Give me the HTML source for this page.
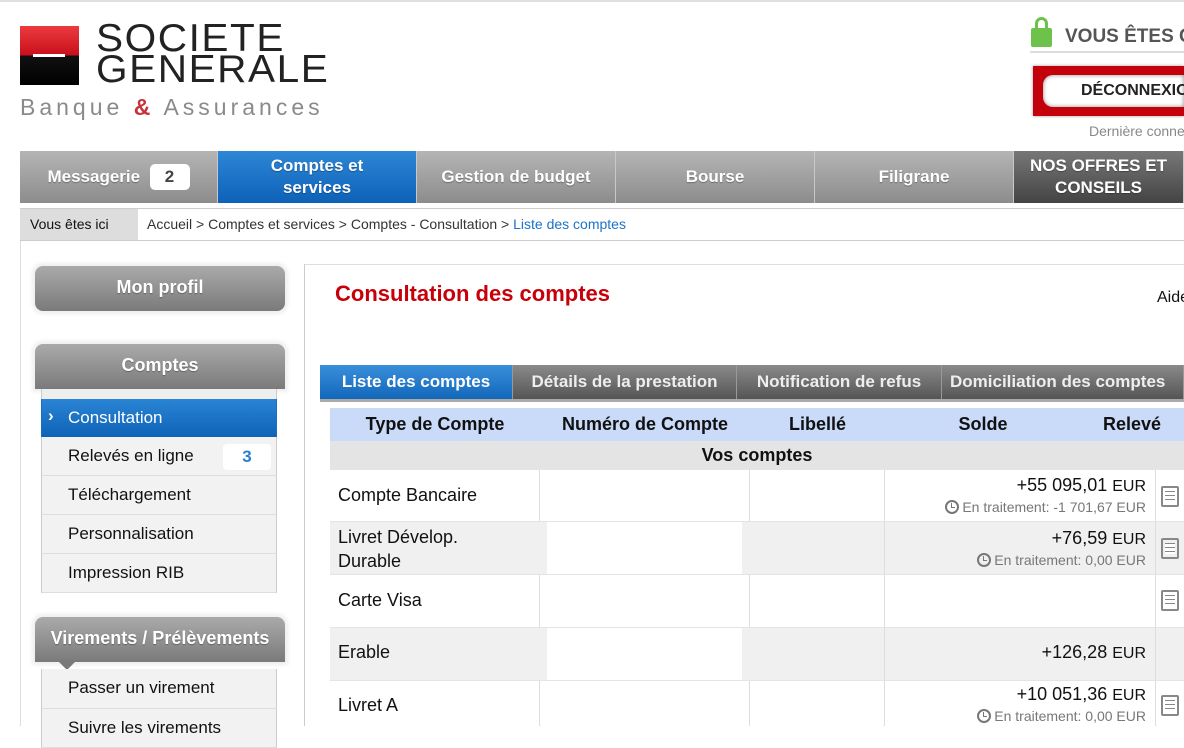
<!DOCTYPE html>
<html><head><meta charset="utf-8"><style>
*{margin:0;padding:0;box-sizing:border-box}
body{width:1184px;height:726px;overflow:hidden;background:#fff;font-family:"Liberation Sans",Arial,sans-serif;position:relative;color:#111}
.a{position:absolute}
.nav{top:151px;height:52px;color:#fff;font-weight:bold;font-size:17px;display:flex;align-items:center;justify-content:center;text-align:center;line-height:22px;text-shadow:0 1px 1px rgba(0,0,0,.3);border-right:1px solid #c8c8c8}
.g{background:linear-gradient(#b5b5b5,#8c8c8c)}
.btn{left:35px;width:250px;height:45px;border-radius:8px;background:linear-gradient(#aaa,#7a7a7a);color:#fff;font-weight:bold;font-size:18px;text-align:center;line-height:42px;box-shadow:0 0 4px 3px #eee;text-shadow:0 1px 1px rgba(0,0,0,.3)}
.mi{left:41px;width:236px;height:39px;background:#f2f2f2;border-bottom:1px solid #ddd;font-size:17px;line-height:38px;padding-left:26px;border-left:1px solid #ccc;border-right:1px solid #ccc}
.tab{top:365px;height:34px;color:#eee;font-weight:bold;font-size:17px;line-height:34px;text-align:center;background:linear-gradient(#8a8a8a,#555);border-right:1px solid #999;white-space:nowrap;overflow:hidden}
.th{top:408px;height:33px;font-weight:bold;font-size:18px;line-height:33px;text-align:center}
.row{left:330px;width:854px}
.cell{position:absolute;top:0;height:100%;font-size:18px}
.amt{position:absolute;right:38px;text-align:right;font-size:18px;white-space:nowrap}
.amt small{font-size:16px}
.tr{position:absolute;right:38px;text-align:right;font-size:14px;color:#777;white-space:nowrap}
.clk{display:inline-block;width:14px;height:14px;border:2px solid #777;border-radius:50%;vertical-align:-2px;margin-right:3px;position:relative}
.clk:after{content:"";position:absolute;left:4px;top:1px;width:3px;height:4px;border-left:1.5px solid #777;border-bottom:1.5px solid #777}
.doc{position:absolute;left:1161px;width:18px;height:21px;border:2px solid #888;border-radius:2px;background:repeating-linear-gradient(#fff 0 3px,#888 3px 4px);background-clip:content-box;padding:3px 2px}
</style></head><body>
<div class="a" style="top:0;left:0;width:1184px;height:2px;background:#e0e0e0"></div>
<!-- logo -->
<div class="a" style="left:20px;top:26px;width:59px;height:59px;background:linear-gradient(#ec3a3f 0,#c8101a 50%,#111 50%,#000)"></div>
<div class="a" style="left:33px;top:54px;width:32px;height:3px;background:#fff"></div>
<div class="a" style="left:96px;top:23px;font-size:39px;line-height:31px;color:#222;letter-spacing:1.5px;transform:scaleX(1.04);transform-origin:left">SOCIETE<br>GENERALE</div>
<div class="a" style="left:20px;top:94px;font-size:23px;color:#8a8a8a;letter-spacing:4px">Banque <span style="color:#c8323a;font-weight:bold">&amp;</span> Assurances</div>
<!-- right header -->
<div class="a" style="left:1031px;top:28px;width:21px;height:19px;background:#6cc24a;border-radius:2px"></div>
<div class="a" style="left:1035px;top:17px;width:13px;height:14px;border:3px solid #6cc24a;border-bottom:none;border-radius:7px 7px 0 0"></div>
<div class="a" style="left:1065px;top:26px;font-size:19px;font-weight:bold;color:#555;white-space:nowrap">VOUS ÊTES C</div>
<div class="a" style="left:1030px;top:51px;width:154px;height:2px;background:#ddd"></div>
<div class="a" style="left:1033px;top:66px;width:151px;height:50px;background:#c4000b;box-shadow:0 0 3px #999"></div>
<div class="a" style="left:1043px;top:75px;width:141px;height:32px;background:#fff;border-radius:10px 0 0 10px;box-shadow:inset 0 0 4px #888;font-weight:bold;font-size:16px;line-height:32px;padding-left:38px;white-space:nowrap;overflow:hidden;color:#222">DÉCONNEXIO</div>
<div class="a" style="left:1089px;top:123px;font-size:14px;color:#888;white-space:nowrap">Dernière conne</div>
<!-- nav -->
<div class="a nav g" style="left:20px;width:198px">Messagerie&nbsp;&nbsp;<span style="display:inline-block;background:#fff;color:#444;border-radius:5px;width:40px;height:26px;line-height:26px;text-shadow:none">2</span></div>
<div class="a nav" style="left:218px;width:199px;background:linear-gradient(#2e86d6,#0d62b8)">Comptes et<br>services</div>
<div class="a nav g" style="left:417px;width:199px">Gestion de budget</div>
<div class="a nav g" style="left:616px;width:199px">Bourse</div>
<div class="a nav g" style="left:815px;width:199px">Filigrane</div>
<div class="a nav" style="left:1014px;width:170px;background:linear-gradient(#777,#444)">NOS OFFRES ET<br>CONSEILS</div>
<!-- breadcrumb -->
<div class="a" style="left:20px;top:208px;width:1164px;height:33px;border-top:1px solid #ccc;border-bottom:1px solid #ccc"></div>
<div class="a" style="left:20px;top:209px;width:118px;height:31px;background:#ddd;font-size:14px;line-height:31px;padding-left:10px">Vous êtes ici</div>
<div class="a" style="left:147px;top:209px;font-size:14px;line-height:31px;color:#333">Accueil &gt; Comptes et services &gt; Comptes - Consultation &gt; <span style="color:#1a73c9">Liste des comptes</span></div>
<div class="a" style="left:20px;top:241px;width:1px;height:485px;background:#ddd"></div>
<!-- left -->
<div class="a btn" style="top:266px">Mon profil</div>
<div class="a btn" style="top:344px;border-radius:8px 8px 0 0">Comptes</div>
<div class="a" style="left:58px;top:388px;width:0;height:0;border-left:9px solid transparent;border-right:9px solid transparent;border-top:9px solid #7a7a7a"></div>
<div class="a" style="left:41px;top:389px;width:236px;height:10px;background:#eee;border-left:1px solid #ccc;border-right:1px solid #ccc"></div>
<div class="a mi" style="top:399px;background:linear-gradient(#2a84d4,#0f63b7);color:#fff;border-color:#1a6fc0">Consultation</div>
<div class="a" style="left:48px;top:406px;color:#fff;font-size:17px;font-weight:bold">›</div>
<div class="a mi" style="top:437px">Relevés en ligne<span style="position:absolute;left:181px;top:7px;width:48px;height:26px;background:#fff;border-radius:4px;color:#2a7fd0;font-weight:bold;text-align:center;line-height:26px">3</span></div>
<div class="a mi" style="top:476px">Téléchargement</div>
<div class="a mi" style="top:515px">Personnalisation</div>
<div class="a mi" style="top:554px">Impression RIB</div>
<div class="a btn" style="top:617px;border-radius:8px 8px 0 0">Virements / Prélèvements</div>
<div class="a" style="left:58px;top:661px;width:0;height:0;border-left:9px solid transparent;border-right:9px solid transparent;border-top:9px solid #7a7a7a"></div>
<div class="a mi" style="top:669px;height:40px">Passer un virement</div>
<div class="a mi" style="top:709px">Suivre les virements</div>
<!-- main -->
<div class="a" style="left:304px;top:264px;width:880px;height:1px;background:#ddd"></div>
<div class="a" style="left:304px;top:264px;width:1px;height:462px;background:#ccc"></div>
<div class="a" style="left:335px;top:281px;font-size:22px;font-weight:bold;color:#c8000a">Consultation des comptes</div>
<div class="a" style="left:1157px;top:289px;font-size:16px">Aide</div>
<div class="a tab" style="left:320px;width:193px;background:linear-gradient(#3a8fdb,#1367ba);color:#fff">Liste des comptes</div>
<div class="a tab" style="left:513px;width:224px">Détails de la prestation</div>
<div class="a tab" style="left:737px;width:205px">Notification de refus</div>
<div class="a tab" style="left:942px;width:242px;text-align:left;padding-left:8px">Domiciliation des comptes</div>
<div class="a" style="left:320px;top:399px;width:864px;height:3px;background:#aaa"></div>
<div class="a" style="left:330px;top:408px;width:854px;height:33px;background:#c9dbf9"></div>
<div class="a th" style="left:330px;width:210px">Type de Compte</div>
<div class="a th" style="left:540px;width:210px">Numéro de Compte</div>
<div class="a th" style="left:750px;width:135px">Libellé</div>
<div class="a th" style="left:885px;width:196px">Solde</div>
<div class="a th" style="left:1082px;width:100px">Relevé</div>
<div class="a" style="left:330px;top:441px;width:854px;height:29px;background:#e4e4e4;text-align:center;font-weight:bold;font-size:18px;line-height:29px">Vos comptes</div>
<!-- rows -->
<div class="a row" style="top:470px;height:52px;border-bottom:1px solid #e4e4e4">
 <div class="cell" style="left:209px;width:1px;background:#ddd"></div><div class="cell" style="left:419px;width:1px;background:#ddd"></div><div class="cell" style="left:554px;width:1px;background:#ddd"></div><div class="cell" style="left:825px;width:1px;background:#ddd"></div>
 <div class="cell" style="left:8px;top:15px;height:auto">Compte Bancaire</div>
 <div class="amt" style="top:5px">+55 095,01 <small>EUR</small></div>
 <div class="tr" style="top:29px"><span class="clk"></span>En traitement: -1 701,67 EUR</div>
</div>
<div class="doc" style="top:486px"></div>
<div class="a row" style="top:522px;height:53px;background:#f0f0f0;border-bottom:1px solid #e4e4e4">
 <div class="cell" style="left:217px;width:195px;background:#fff"></div><div class="cell" style="left:554px;width:1px;background:#ddd"></div><div class="cell" style="left:825px;width:1px;background:#ddd"></div>
 <div class="cell" style="left:8px;top:3px;height:auto;line-height:24px">Livret Dévelop.<br>Durable</div>
 <div class="amt" style="top:6px">+76,59 <small>EUR</small></div>
 <div class="tr" style="top:30px"><span class="clk"></span>En traitement: 0,00 EUR</div>
</div>
<div class="doc" style="top:538px"></div>
<div class="a row" style="top:575px;height:53px;border-bottom:1px solid #e4e4e4">
 <div class="cell" style="left:209px;width:1px;background:#ddd"></div><div class="cell" style="left:419px;width:1px;background:#ddd"></div><div class="cell" style="left:554px;width:1px;background:#ddd"></div><div class="cell" style="left:825px;width:1px;background:#ddd"></div>
 <div class="cell" style="left:8px;top:15px;height:auto">Carte Visa</div>
</div>
<div class="doc" style="top:590px"></div>
<div class="a row" style="top:628px;height:53px;background:#f0f0f0;border-bottom:1px solid #e4e4e4">
 <div class="cell" style="left:217px;width:195px;background:#fff"></div><div class="cell" style="left:554px;width:1px;background:#ddd"></div><div class="cell" style="left:825px;width:1px;background:#ddd"></div>
 <div class="cell" style="left:8px;top:14px;height:auto">Erable</div>
 <div class="amt" style="top:14px">+126,28 <small>EUR</small></div>
</div>
<div class="a row" style="top:681px;height:45px">
 <div class="cell" style="left:209px;width:1px;background:#ddd"></div><div class="cell" style="left:419px;width:1px;background:#ddd"></div><div class="cell" style="left:554px;width:1px;background:#ddd"></div><div class="cell" style="left:825px;width:1px;background:#ddd"></div>
 <div class="cell" style="left:8px;top:14px;height:auto">Livret A</div>
 <div class="amt" style="top:3px">+10 051,36 <small>EUR</small></div>
 <div class="tr" style="top:27px"><span class="clk"></span>En traitement: 0,00 EUR</div>
</div>
<div class="doc" style="top:695px"></div>
</body></html>
